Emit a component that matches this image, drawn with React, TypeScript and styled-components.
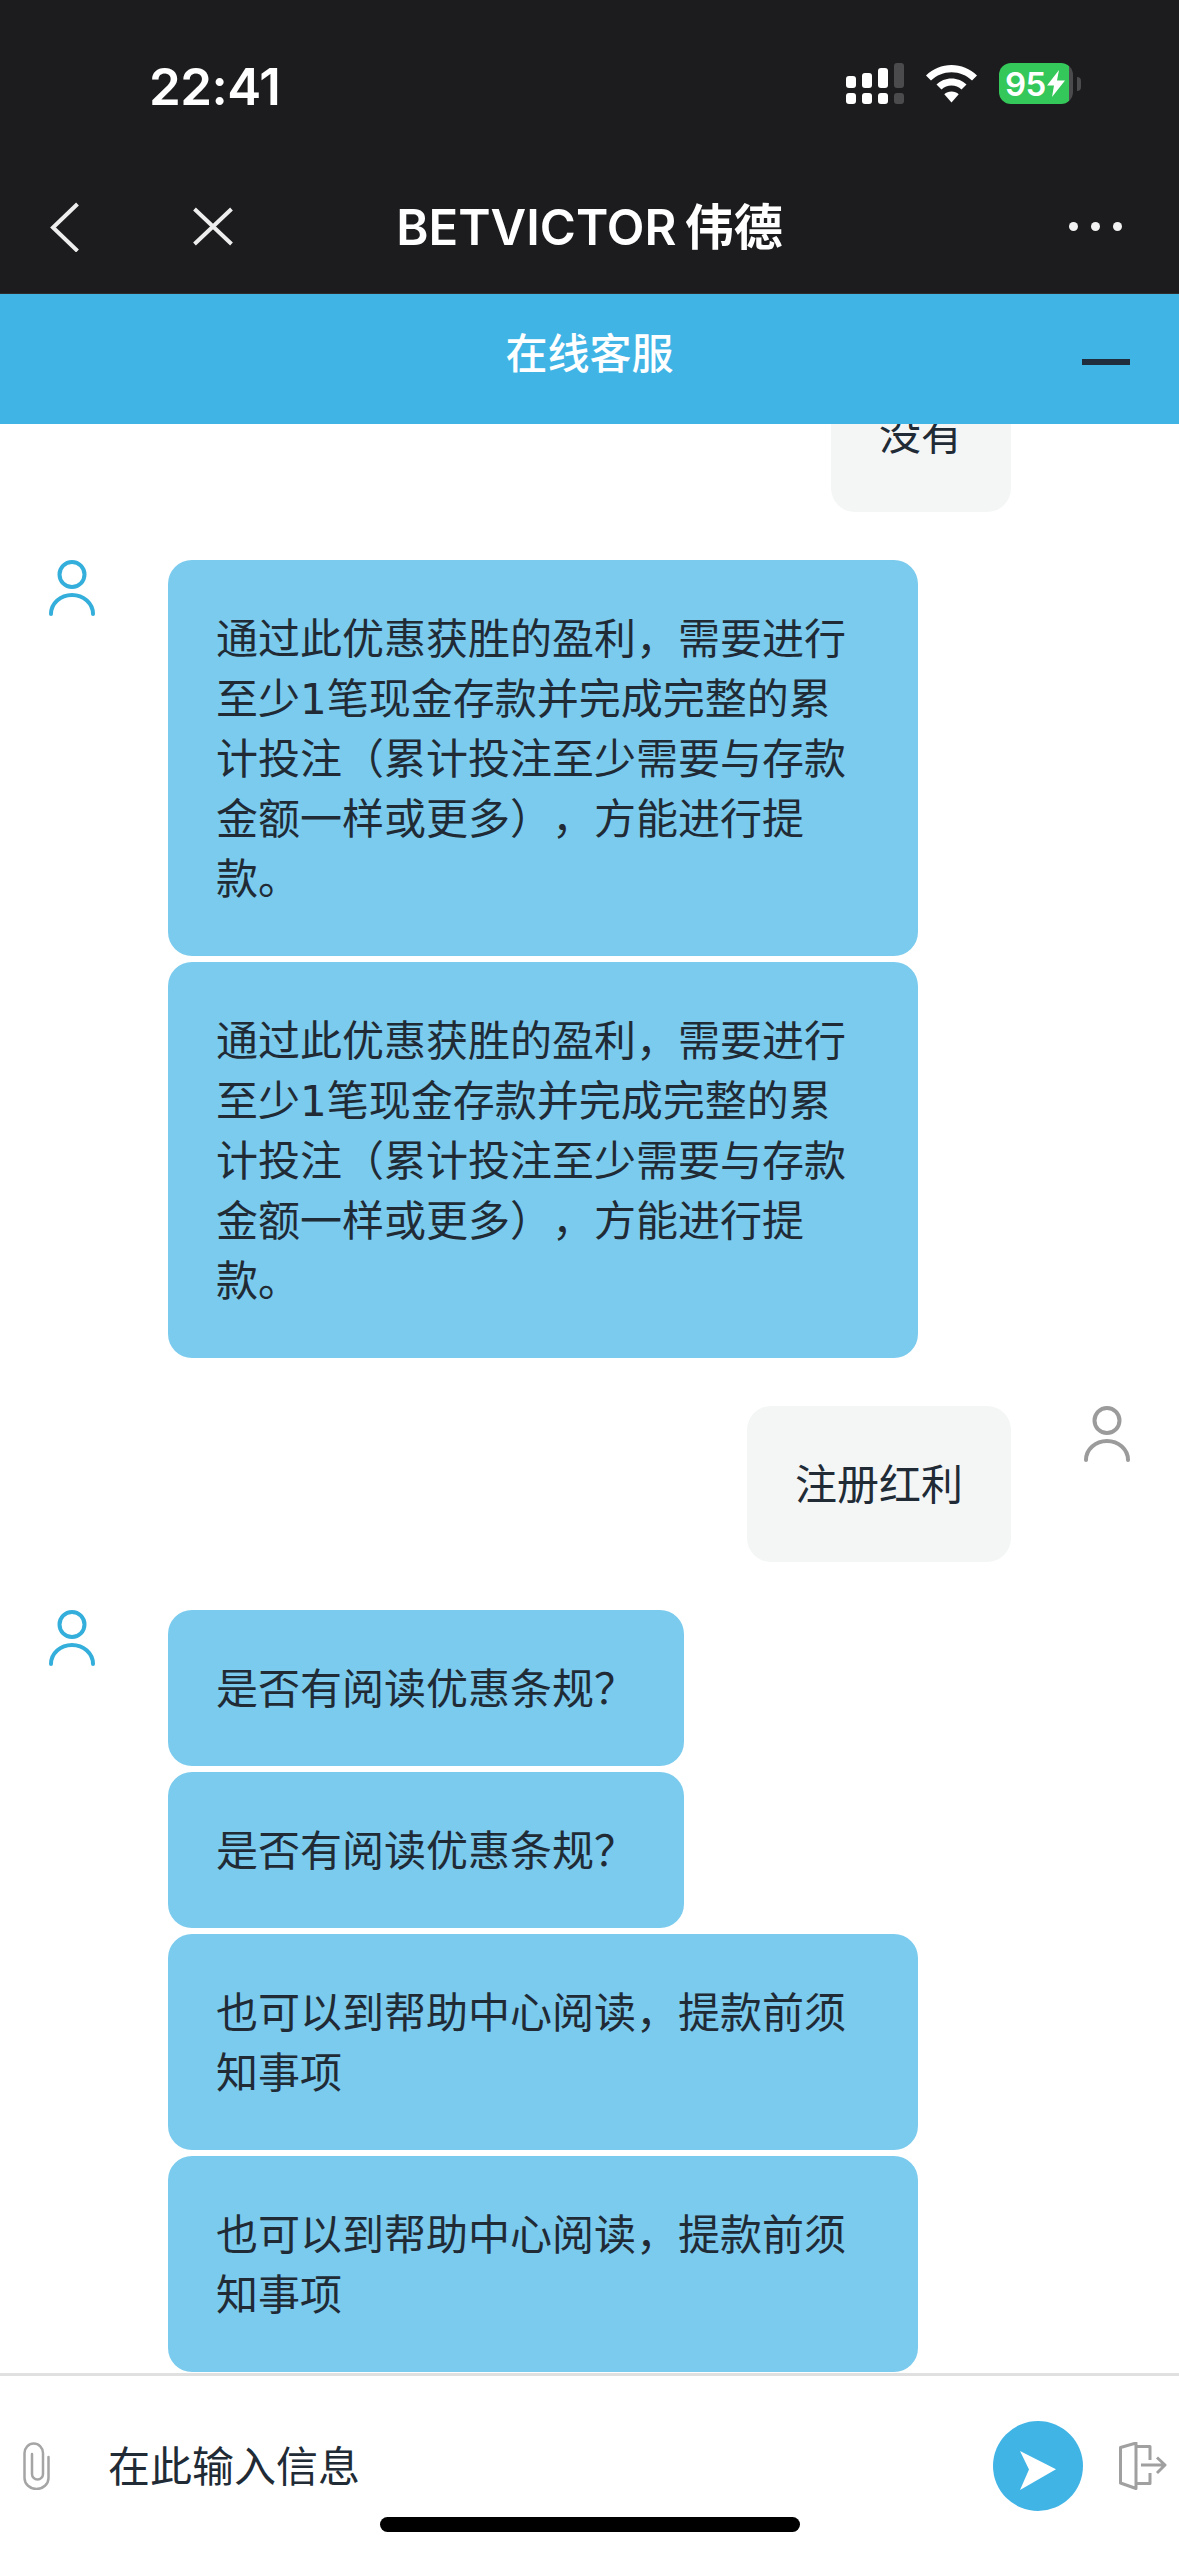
import styled, {createGlobalStyle} from "styled-components";

const GlobalStyle = createGlobalStyle`
  html, body {
    margin: 0;
    padding: 0;
    background: #fff;
  }
  * {
    box-sizing: border-box;
  }
`

const Page = styled.div`
  width: 1179px;
  height: 2556px;
  display: flex;
  flex-direction: column;
  overflow: hidden;
  background: #fff;
  color: #212b36;
  font-family: "Inter", "Noto Sans CJK SC", sans-serif;
`
const TopChrome = styled.header`
  height: 294px;
  flex: none;
  background: #1c1c1e;
  border-bottom: 1px solid #2c2d2f;
`
const StatusBar = styled.div`
  height: 160px;
  padding: 7px 98px 0 149px;
  display: flex;
  align-items: center;
  justify-content: space-between;
`
const Clock = styled.span`
  position: relative;
  top: 3px;
  color: #fff;
  font-size: 51px;
  font-weight: 600;
  letter-spacing: -0.5px;
`
const StatusIcons = styled.div`
  display: flex;
  align-items: center;
  gap: 22px;
`
const Battery = styled.div`
  display: flex;
  align-items: center;
  gap: 4px;
`
const BatteryBody = styled.div`
  width: 74px;
  height: 41px;
  padding-left: 6px;
  display: flex;
  align-items: center;
  gap: 1px;
  border-radius: 12px;
  background: linear-gradient(to right, #34c759 95%, #4b4b4d 95%);
  color: #fff;
  font-size: 33px;
  font-weight: 600;
  letter-spacing: -0.5px;
`
const BatteryNub = styled.div`
  width: 4px;
  height: 14px;
  border-radius: 0 7px 7px 0;
  background: #4b4b4d;
`
const NavBar = styled.nav`
  height: 133px;
  display: grid;
  grid-template-columns: 1fr auto 1fr;
  align-items: center;
`
const NavLeft = styled.div`
  padding-left: 50px;
  display: flex;
  align-items: center;
  gap: 113px;
`
const NavTitle = styled.h1`
  margin: 0 0 6px;
  color: #fff;
  font-size: 49px;
  font-weight: 600;
  white-space: nowrap;

  span {
    margin-left: -4px;
  }
`
const NavRight = styled.div`
  padding-right: 57px;
  display: flex;
  justify-content: flex-end;
  gap: 13px;
`
const Dot = styled.i`
  width: 9px;
  height: 9px;
  border-radius: 50%;
  background: #f2f2f2;
`
const ChatHeader = styled.div`
  height: 130px;
  flex: none;
  display: grid;
  grid-template-columns: 1fr auto 1fr;
  align-items: center;
  background: #41b4e6;
`
const ChatTitle = styled.div`
  grid-column: 2;
  margin-bottom: 18px;
  color: #fff;
  font-size: 42px;
  font-weight: 500;
`
const Minimize = styled.div`
  justify-self: end;
  width: 48px;
  height: 6px;
  margin: 6px 49px 0 0;
  background: #1f2d3d;
`
const Messages = styled.main`
  flex: 1;
  min-height: 0;
  overflow: hidden;
`
// the list is scrolled a little, so the first bubble sits under the header
const MessageList = styled.div`
  margin-top: -68px;
  display: flex;
  flex-direction: column;
  gap: 48px;
`
const Row = styled.div<{ $mine?: boolean }>`
  padding: 0 49px;
  display: flex;
  flex-direction: ${props => props.$mine ? "row-reverse" : "row"};
  gap: 73px;
`
const Bubbles = styled.div<{ $mine?: boolean }>`
  width: ${props => props.$mine ? "auto" : "750px"};
  display: flex;
  flex-direction: column;
  align-items: ${props => props.$mine ? "flex-end" : "flex-start"};
  gap: 6px;
`
const Bubble = styled.div<{ $mine?: boolean }>`
  max-width: 750px;
  padding: 50px 48px 46px;
  border-radius: 24px;
  background: ${props => props.$mine ? "#f4f6f6" : "#7bcbee"};
  font-family: "DejaVu Sans", "Noto Sans CJK SC", sans-serif;
  font-size: 42px;
  line-height: 60px;
  text-spacing-trim: space-all;
`
const InputBar = styled.footer`
  position: relative;
  height: 183px;
  flex: none;
  padding: 45px 12px 0 23px;
  display: flex;
  align-items: flex-start;
  border-top: 3px solid #e0e0e0;
`
const AttachIcon = styled.svg`
  width: 27px;
  height: 48px;
  margin-top: 21px;
  flex: none;
`
const MessageInput = styled.input`
  flex: 1;
  min-width: 0;
  height: 90px;
  margin-left: 58px;
  padding: 0;
  border: none;
  outline: none;
  background: transparent;
  font-family: inherit;
  font-size: 42px;

  &::placeholder {
    color: #212b36;
    opacity: 1;
  }
`
const SendButton = styled.button`
  width: 90px;
  height: 90px;
  flex: none;
  padding: 0;
  border: none;
  border-radius: 50%;
  background: #41b4e6;
  display: flex;
`
const ExitIcon = styled.svg`
  width: 48px;
  height: 48px;
  margin: 21px 0 0 36px;
  flex: none;
`
const HomeIndicator = styled.div`
  position: absolute;
  left: 380px;
  bottom: 24px;
  width: 420px;
  height: 15px;
  border-radius: 8px;
  background: #000;
`

const TERMS = "通过此优惠获胜的盈利，需要进行至少1笔现金存款并完成完整的累计投注（累计投注至少需要与存款金额一样或更多），方能进行提款。"
const READ_TERMS = "是否有阅读优惠条规？"
const HELP_CENTER = "也可以到帮助中心阅读，提款前须知事项"

interface MessageGroup {
    id: number;
    mine: boolean;
    texts: string[];
}

const messages: MessageGroup[] = [
    {id: 1, mine: true, texts: ["没有"]},
    {id: 2, mine: false, texts: [TERMS, TERMS]},
    {id: 3, mine: true, texts: ["注册红利"]},
    {id: 4, mine: false, texts: [READ_TERMS, READ_TERMS, HELP_CENTER, HELP_CENTER]},
]

function Avatar({mine}: { mine: boolean }) {
    const color = mine ? "#9b9b9b" : "#34aedb";
    return (
        <svg width="46" height="56" viewBox="0 0 46 56" fill="none" stroke={color} strokeWidth="4"
             strokeLinecap="round" style={{flex: "none"}}>
            <circle cx="23" cy="14.5" r="12.5"/>
            <path d="M2 54A21 19 0 0 1 44 54"/>
        </svg>
    )
}

function SignalIcon() {
    const bars = [{x: 0, y: 13}, {x: 16, y: 10}, {x: 32, y: 5}, {x: 48, y: 0}];
    return (
        <svg width="58" height="41" viewBox="0 0 58 41">
            {bars.map((bar, i) => {
                const fill = i === 3 ? "#4b4b4d" : "#fff";
                return (
                    <g key={bar.x} fill={fill}>
                        <rect x={bar.x} y={bar.y} width="10" height={25 - bar.y} rx="3"/>
                        <rect x={bar.x} y="30" width="10" height="11" rx="3"/>
                    </g>
                )
            })}
        </svg>
    )
}

function WifiIcon() {
    return (
        <svg width="51" height="38" viewBox="0 0 51 38" fill="#fff">
            <path d="M25.5 0C35 0 44 3.800 51 10.500L46 15.500C40.500 10.200 33.300 7.200 25.500 7.200C17.700 7.200 10.500 10.200 5 15.500L0 10.500C7 3.800 16 0 25.500 0Z"/>
            <path d="M25.500 13.500C31.300 13.500 36.600 15.800 40.500 19.500L35.500 24.500C32.800 22.100 29.300 20.600 25.500 20.600C21.700 20.600 18.200 22.100 15.500 24.500L10.500 19.500C14.400 15.800 19.700 13.500 25.500 13.500Z"/>
            <path d="M25.500 26.500C28.300 26.500 30.800 27.500 32.700 29.300L25.500 37.500L18.300 29.300C20.200 27.500 22.700 26.500 25.500 26.500Z"/>
        </svg>
    )
}

function App() {
    return (
        <Page lang="zh-CN">
            <GlobalStyle/>
            <TopChrome>
                <StatusBar>
                    <Clock>22:41</Clock>
                    <StatusIcons>
                        <SignalIcon/>
                        <WifiIcon/>
                        <Battery>
                            <BatteryBody>
                                95
                                <svg width="18" height="27" viewBox="0 0 18 27" fill="#fff">
                                    <path d="M12 0L0 15.500H7L5 27L18 10.500H10Z"/>
                                </svg>
                            </BatteryBody>
                            <BatteryNub/>
                        </Battery>
                    </StatusIcons>
                </StatusBar>
                <NavBar>
                    <NavLeft>
                        <svg width="30" height="50" viewBox="0 0 30 50" fill="none" stroke="#eee" strokeWidth="4">
                            <path d="M27.500 2L3 25.500L27.500 49"/>
                        </svg>
                        <svg width="40" height="40" viewBox="0 0 40 40" fill="none" stroke="#eee" strokeWidth="4">
                            <path d="M1.500 2L38.500 37M38.500 2L1.500 37"/>
                        </svg>
                    </NavLeft>
                    <NavTitle>BETVICTOR <span>伟德</span></NavTitle>
                    <NavRight>
                        <Dot/>
                        <Dot/>
                        <Dot/>
                    </NavRight>
                </NavBar>
            </TopChrome>
            <ChatHeader>
                <ChatTitle>在线客服</ChatTitle>
                <Minimize/>
            </ChatHeader>
            <Messages>
                <MessageList>
                    {messages.map(group =>
                        <Row key={group.id} $mine={group.mine}>
                            <Avatar mine={group.mine}/>
                            <Bubbles $mine={group.mine}>
                                {group.texts.map((text, i) =>
                                    <Bubble key={i} $mine={group.mine}>{text}</Bubble>
                                )}
                            </Bubbles>
                        </Row>
                    )}
                </MessageList>
            </Messages>
            <InputBar>
                <AttachIcon viewBox="0 0 27 48" fill="none" stroke="#a5a5a5" strokeWidth="2.500" strokeLinecap="round">
                    <path d="M25.500 15V36A12 11 0 0 1 1.500 36V11A9.250 9.500 0 0 1 20 11V32A5.500 5.500 0 0 1 9 32V12"/>
                </AttachIcon>
                <MessageInput placeholder="在此输入信息" readOnly/>
                <SendButton aria-label="send">
                    <svg width="90" height="90" viewBox="0 0 90 90" fill="#fff">
                        <path d="M27 30L63 48.300L27 69L36 48.500Z"/>
                    </svg>
                </SendButton>
                <ExitIcon viewBox="0 0 48 48" fill="none" stroke="#a0a0a0" strokeWidth="3" strokeLinejoin="round">
                    <path d="M1.500 5.500L17 1V46.500L1.500 41Z"/>
                    <path d="M17 4.500H31V18M31 31V41.500H17"/>
                    <path d="M22 23H46M38 15.500L46 23L38 31"/>
                </ExitIcon>
                <HomeIndicator/>
            </InputBar>
        </Page>
    )
}

export default App
